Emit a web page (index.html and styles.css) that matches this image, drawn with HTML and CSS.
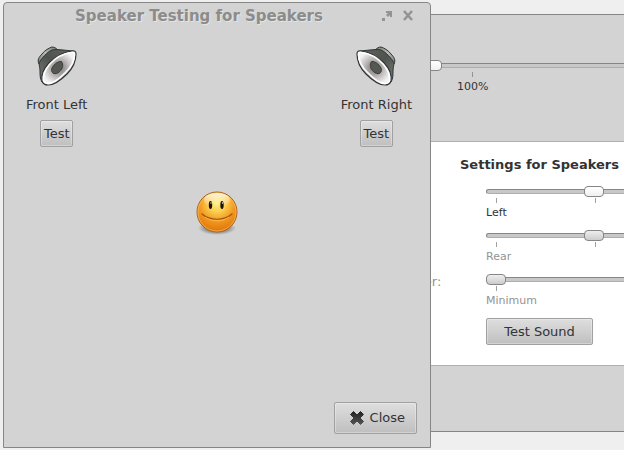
FILE: index.html
```html
<!DOCTYPE html>
<html lang="en">
<head>
    <meta charset="UTF-8">
    <meta name="viewport" content="width=device-width, initial-scale=1.0">
    <title>Speaker Testing for Speakers</title>
    <link rel="stylesheet" href="styles.css">
</head>
<body>
<div class="desktop">
    <!-- Sound settings window -->
    <main class="window settings">
        <section class="volume">
            <input class="slider" type="range" min="0" max="100" value="46" aria-label="Output volume">
            <div class="marks volume-marks">
                <span class="mark">100%</span>
            </div>
        </section>

        <section class="panel">
            <h2>Settings for Speakers</h2>
            <div class="row">
                <label for="balance">Balance:</label>
                <div class="scale">
                    <input class="slider" id="balance" type="range" min="0" max="100" value="50">
                    <div class="marks"><i></i><i></i><i></i></div>
                    <span class="caption">Left</span>
                </div>
            </div>
            <div class="row disabled">
                <label for="fade">Fade:</label>
                <div class="scale">
                    <input class="slider" id="fade" type="range" min="0" max="100" value="50" disabled>
                    <div class="marks"><i></i><i></i><i></i></div>
                    <span class="caption">Rear</span>
                </div>
            </div>
            <div class="row disabled">
                <label for="subwoofer">Subwoofer:</label>
                <div class="scale">
                    <input class="slider" id="subwoofer" type="range" min="0" max="100" value="0" disabled>
                    <div class="marks"><i></i></div>
                    <span class="caption">Minimum</span>
                </div>
            </div>
            <button class="button test-sound" type="button">Test Sound</button>
        </section>
    </main>

    <!-- Speaker test dialog -->
    <div class="window dialog" role="dialog" aria-labelledby="dialog-title">
        <header class="titlebar">
            <h1 id="dialog-title">Speaker Testing for Speakers</h1>
            <button class="title-button" type="button" aria-label="Maximize">
                <svg width="12" height="12" viewBox="0 0 12 12">
                    <path d="M5 1h6v6H9V5L7 7 5 5l2-2H5zM1 8h3v3H1z" fill="#939393"/>
                </svg>
            </button>
            <button class="title-button" type="button" aria-label="Close window">
                <svg width="12" height="12" viewBox="0 0 12 12">
                    <path d="M2 1l8 9M10 1l-8 9" stroke="#939393" stroke-width="2.5"/>
                </svg>
            </button>
        </header>

        <div class="speakers">
            <div class="speaker">
                <svg width="46" height="48" viewBox="0 0 46 48">
                    <defs>
                        <linearGradient id="cone" x1="0" y1="1" x2="1" y2="0">
                            <stop offset="0" stop-color="#7b7e77"/>
                            <stop offset="0.5" stop-color="#50534d"/>
                            <stop offset="1" stop-color="#62655e"/>
                        </linearGradient>
                        <linearGradient id="magnet" x1="0" y1="1" x2="1" y2="0">
                            <stop offset="0" stop-color="#73766f"/>
                            <stop offset="0.5" stop-color="#b8bbb2"/>
                            <stop offset="1" stop-color="#73766f"/>
                        </linearGradient>
                        <radialGradient id="face">
                            <stop offset="0.2" stop-color="#8f8b8a"/>
                            <stop offset="0.65" stop-color="#c9c6c5"/>
                            <stop offset="1" stop-color="#f3f2f2"/>
                        </radialGradient>
                    </defs>
                    <g id="speaker-shape" stroke-linejoin="round">
                        <path d="M5 22C3 18 5 15 8 12c3-4 7-6 10-7 2 0 4 1 6 3l-8 10z" fill="url(#magnet)" stroke="#2e3436"/>
                        <path d="M5 21c3-5 8-11 13-13 5-1 10 0 21 1L8 40C6 37 6 33 6 29c0-3-1-6-1-8z" fill="url(#cone)" stroke="#2e3436"/>
                        <path d="M38 9c3-.5 4 .5 4 3 0 7-4 15-9 20-6 6-13 11-19 11-3 0-5-1-6-4-1-7 2-13 7-18 7-7 15-11 23-12z" fill="url(#face)" stroke="#2e3436" stroke-width="1.200"/>
                        <path d="M37.500 10.500c2-.3 3 .3 3 2 0 6-4 13-9 18-6 6-12 11-17 11-3 0-4-1-5-3-1-6 2-11 6-16 6-7 14-11 22-12z" fill="none" stroke="#fff" stroke-width="1.500"/>
                        <path d="M17.500 27.500c1-4 6-8.500 10-8 2 3 1.500 7-2 10-2 2-4 2.500-6 2-1.500-1-2-2.500-2-4z" fill="#555753" stroke="#3a3d39"/>
                    </g>
                </svg>
                <span class="name">Front Left</span>
                <button class="button small" type="button">Test</button>
            </div>
            <div class="speaker">
                <svg width="46" height="48" viewBox="0 0 46 48">
                    <use href="#speaker-shape" transform="matrix(-1 0 0 1 46 0)"/>
                </svg>
                <span class="name">Front Right</span>
                <button class="button small" type="button">Test</button>
            </div>
        </div>

        <svg class="listener" width="48" height="48" viewBox="0 0 48 48">
            <defs>
                <radialGradient id="skin" cx="0.5" cy="0.28" r="0.72">
                    <stop offset="0" stop-color="#ffee78"/>
                    <stop offset="0.3" stop-color="#fccf50"/>
                    <stop offset="0.6" stop-color="#f39a22"/>
                    <stop offset="1" stop-color="#de7408"/>
                </radialGradient>
                <linearGradient id="shine" x1="0" y1="0" x2="0" y2="1">
                    <stop offset="0" stop-color="#fff" stop-opacity="0.8"/>
                    <stop offset="1" stop-color="#fff" stop-opacity="0"/>
                </linearGradient>
                <radialGradient id="shade">
                    <stop offset="0.5" stop-color="#000" stop-opacity="0.4"/>
                    <stop offset="1" stop-color="#000" stop-opacity="0"/>
                </radialGradient>
            </defs>
            <ellipse cx="24" cy="40" rx="19" ry="7" fill="url(#shade)"/>
            <circle cx="24" cy="24" r="20" fill="url(#skin)" stroke="#a8651f"/>
            <circle cx="24" cy="24" r="19" fill="none" stroke="#ffc66b" stroke-opacity="0.6"/>
            <ellipse cx="24" cy="12" rx="13" ry="7" fill="url(#shine)"/>
            <ellipse cx="17.500" cy="17" rx="1.700" ry="4" fill="#1b1300"/>
            <ellipse cx="29" cy="17" rx="1.700" ry="4" fill="#1b1300"/>
            <circle cx="18" cy="15" r="0.700" fill="#fff"/>
            <circle cx="29.500" cy="15" r="0.700" fill="#fff"/>
            <path d="M9 26c8 7 22 7 30 0" fill="none" stroke="#9a5510" stroke-width="1.200" stroke-linecap="round"/>
            <path d="M12 29c7 5 17 5 24 0" fill="none" stroke="#ffc252" stroke-opacity="0.7"/>
        </svg>

        <footer class="actions">
            <button class="button close" type="button">
                <svg width="16" height="16" viewBox="0 0 16 16">
                    <defs>
                        <linearGradient id="cross" x1="0" y1="0" x2="0" y2="1">
                            <stop offset="0" stop-color="#222"/>
                            <stop offset="1" stop-color="#555"/>
                        </linearGradient>
                    </defs>
                    <path d="M4.500 1.500L8 5l3.500-3.500 3 3L11 8l3.500 3.500-3 3L8 11l-3.500 3.500-3-3L5 8 1.500 4.500z" fill="url(#cross)" stroke="url(#cross)" stroke-linejoin="round"/>
                </svg>
                Close
            </button>
        </footer>
    </div>
</div>
</body>
</html>
```

FILE: styles.css
```css
* {
    box-sizing: border-box;
}
body {
    margin: 0;
    background: #efefef;
    color: #333;
    font-family: "DejaVu Sans", sans-serif;
    font-size: 13px;
    line-height: 16px;
}
h1, h2 {
    margin: 0;
}
.desktop {
    position: relative;
    height: 100vh;
    overflow: hidden;
}
.window {
    position: absolute;
    background: #d3d3d3;
    border: 1px solid #868686;
}

/* Settings window */
.settings {
    top: 14px;
    bottom: 18px;
    left: 200px;
    right: -120px;
    display: flex;
    flex-direction: column;
}
.volume {
    height: 126px;
    padding: 45px 39px 0 0;
}
.panel {
    background: #fff;
    border-top: 1px solid #b0b0b0;
    border-bottom: 1px solid #b0b0b0;
    padding: 15px 39px 20px 167px;
}
.panel h2 {
    font-size: 13px;
    line-height: 16px;
    padding-left: 92px;
    margin-bottom: 13px;
}
.row {
    display: grid;
    grid-template-columns: 118px 1fr;
    height: 44px;
}
.disabled {
    color: #939393;
}
.slider {
    -webkit-appearance: none;
    appearance: none;
    display: block;
    width: 100%;
    height: 11px;
    margin: 0;
    background: transparent;
}
.slider::-webkit-slider-runnable-track {
    height: 5px;
    border: 1px solid #adadad;
    border-top-color: #868686;
    border-left-color: #868686;
    border-radius: 3px;
    background: #c8c8c8;
}
.slider::-webkit-slider-thumb {
    -webkit-appearance: none;
    width: 20px;
    height: 11px;
    margin-top: -4px;
    margin-left: -1px;
    border: 1px solid #868686;
    border-radius: 4px;
    background: linear-gradient(#fff, #f0f0f0);
}
.slider:disabled::-webkit-slider-thumb {
    background: linear-gradient(#eee, #ccc);
}
.marks {
    display: flex;
    justify-content: space-between;
    padding: 0 10px;
    margin-top: 1px;
    height: 5px;
}
.marks i {
    width: 1px;
    background: #a0a0a0;
}
.caption {
    display: block;
    font-size: 11px;
    line-height: 20px;
}
.volume-marks {
    height: auto;
    padding: 0 0 0 256px;
    justify-content: flex-start;
}
.mark {
    display: flex;
    flex-direction: column;
    align-items: center;
    font-size: 11px;
    line-height: 20px;
}
.mark::before {
    content: "";
    width: 1px;
    height: 5px;
    background: #939393;
}

/* Buttons */
.button {
    border: 1px solid #a0a0a0;
    border-radius: 2px;
    background: linear-gradient(#dedede, #bfbfbf);
    box-shadow: inset 0 0 0 1px rgba(255, 255, 255, 0.3);
    color: #333;
    font: inherit;
    padding: 0;
}
.button.small {
    width: 33px;
    height: 27px;
}
.test-sound {
    width: 107px;
    height: 27px;
    margin-left: 118px;
}
.close {
    display: flex;
    align-items: center;
    gap: 5px;
    height: 32px;
    padding: 0 11px 0 14px;
}

/* Dialog */
.dialog {
    top: 2px;
    bottom: 2px;
    left: 3px;
    right: 193px;
    display: flex;
    flex-direction: column;
    border-radius: 4px 4px 0 0;
}
.titlebar {
    display: flex;
    align-items: center;
    gap: 9px;
    height: 26px;
    padding-right: 16px;
}
.titlebar h1 {
    flex: 1;
    padding-left: 22px;
    text-align: center;
    font-size: 15px;
    color: #8c8c8c;
    text-shadow: 1px 1px 0 #e4e4e4;
}
.title-button {
    display: flex;
    border: 0;
    padding: 0;
    background: none;
}
.speakers {
    display: flex;
    justify-content: space-between;
    padding: 13px 18px 0 22px;
}
.speaker {
    display: flex;
    flex-direction: column;
    align-items: center;
}
.name {
    margin: 7px 0;
}
.listener {
    align-self: center;
    margin-top: 41px;
}
.actions {
    display: flex;
    justify-content: flex-end;
    margin-top: auto;
    padding: 0 13px 13px;
}
```
